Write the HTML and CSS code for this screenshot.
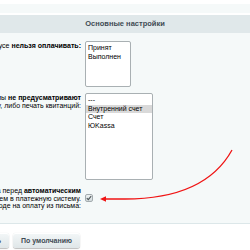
FILE: index.html
```html
<!DOCTYPE html>
<html lang="ru">
<head>
  <meta charset="UTF-8" />
  <title>Основные настройки</title>
  <link rel="stylesheet" href="styles.css">
</head>
<body>

<div class="tabs"></div>

<div class="detail">
  <div class="detail-head">Основные настройки</div>
  <div class="detail-body">

    <div class="row">
      <div class="label"><div class="label-text">Заказ в статусе <b>нельзя оплачивать:</b></div></div>
      <div class="value">
        <div class="listbox small">
          <div class="opt">Принят</div>
          <div class="opt">Выполнен</div>
        </div>
      </div>
    </div>

    <div class="row">
      <div class="label"><div class="label-text">Платежные системы <b>не предусматривают</b><br>онлайн-оплату, либо печать квитанций:</div></div>
      <div class="value">
        <div class="listbox big">
          <div class="opt">---</div>
          <div class="opt selected">Внутренний счет</div>
          <div class="opt">Счет</div>
          <div class="opt">ЮKassa</div>
        </div>
      </div>
    </div>

    <div class="row">
      <div class="label"><div class="label-text">Показывать страницу оплаты заказа перед <b>автоматическим</b><br>перенаправлением в платежную систему.<br>при переходе на оплату из письма:</div></div>
      <div class="value">
        <span class="checkbox">
          <svg width="6" height="6" viewBox="0 0 6 6"><path d="M0.8 3.1 L2.3 4.6 L5.2 1.2" fill="none" stroke="#4d5558" stroke-width="1.1"/></svg>
        </span>
      </div>
    </div>

  </div>
</div>

<div class="buttons">
  <div class="btn">Применить</div>
  <div class="btn">По умолчанию</div>
</div>

<svg class="pointer" width="250" height="250" viewBox="0 0 250 250">
  <path d="M232 150 Q205 199 125 199 L104 199" fill="none" stroke="#f01414" stroke-width="1.3"/>
  <polygon points="100,199 106,196.2 106,201.8" fill="#f01414"/>
</svg>

</body>
</html>
```

FILE: styles.css
```css
body {
  margin: 0;
  width: 250px;
  height: 250px;
  overflow: hidden;
  position: relative;
  font-family: "Liberation Sans", Arial, sans-serif;
  font-size: 7px;
  color: #000;
  background: #fff;
}

.tabs {
  margin-top: 4px;
  height: 9px;
  background: #f5f9f9;
  border-bottom: 2px solid #fff;
}

.detail-head {
  height: 18px;
  line-height: 18px;
  background: #e0e8ea;
  text-align: center;
  font-weight: bold;
  font-size: 7.5px;
  color: #3f4b54;
}

.detail-body {
  background: #f5f9f9;
  padding: 8px 0 13px;
  border-bottom: 1px solid #dce7e9;
}

.row {
  display: grid;
  grid-template-columns: 81px 1fr;
  column-gap: 4px;
  margin-bottom: 6px;
}

.row:last-child {
  margin-bottom: 0;
}

.label {
  display: flex;
  justify-content: flex-end;
}

.label-text {
  white-space: nowrap;
  text-align: right;
  line-height: 7.5px;
  padding-top: 1px;
}

.listbox {
  background: #fff;
  border: 1px solid #a9b0b3;
  border-radius: 2px;
  padding: 2px 0;
  box-sizing: border-box;
}

.listbox.small {
  width: 46px;
  height: 46px;
}

.listbox.big {
  width: 68px;
  height: 87px;
}

.opt {
  padding: 0 2px;
  line-height: 8.5px;
  white-space: nowrap;
}

.opt.selected {
  background: #d9d9d9;
}

.checkbox {
  display: flex;
  align-items: center;
  justify-content: center;
  width: 8px;
  height: 8px;
  box-sizing: border-box;
  margin-top: 8px;
  border: 1px solid #a4acaf;
  border-radius: 2px;
  background: linear-gradient(#eef2f3, #d2dadc);
}

.buttons {
  width: 80px;
  display: flex;
  justify-content: flex-end;
  gap: 4px;
  margin-top: 9px;
}

.btn {
  flex-shrink: 0;
  height: 15px;
  line-height: 15px;
  padding: 0 8px;
  border-radius: 3px;
  background: linear-gradient(#f3f7f8, #dfe6e8);
  box-shadow: 0 0 1px rgba(0, 0, 0, .15), 0 1px 1px rgba(0, 0, 0, .25), inset 0 1px #fff;
  font-weight: bold;
  color: #3f4b54;
  white-space: nowrap;
}

.pointer {
  position: absolute;
  left: 0;
  top: 0;
  pointer-events: none;
}
```
